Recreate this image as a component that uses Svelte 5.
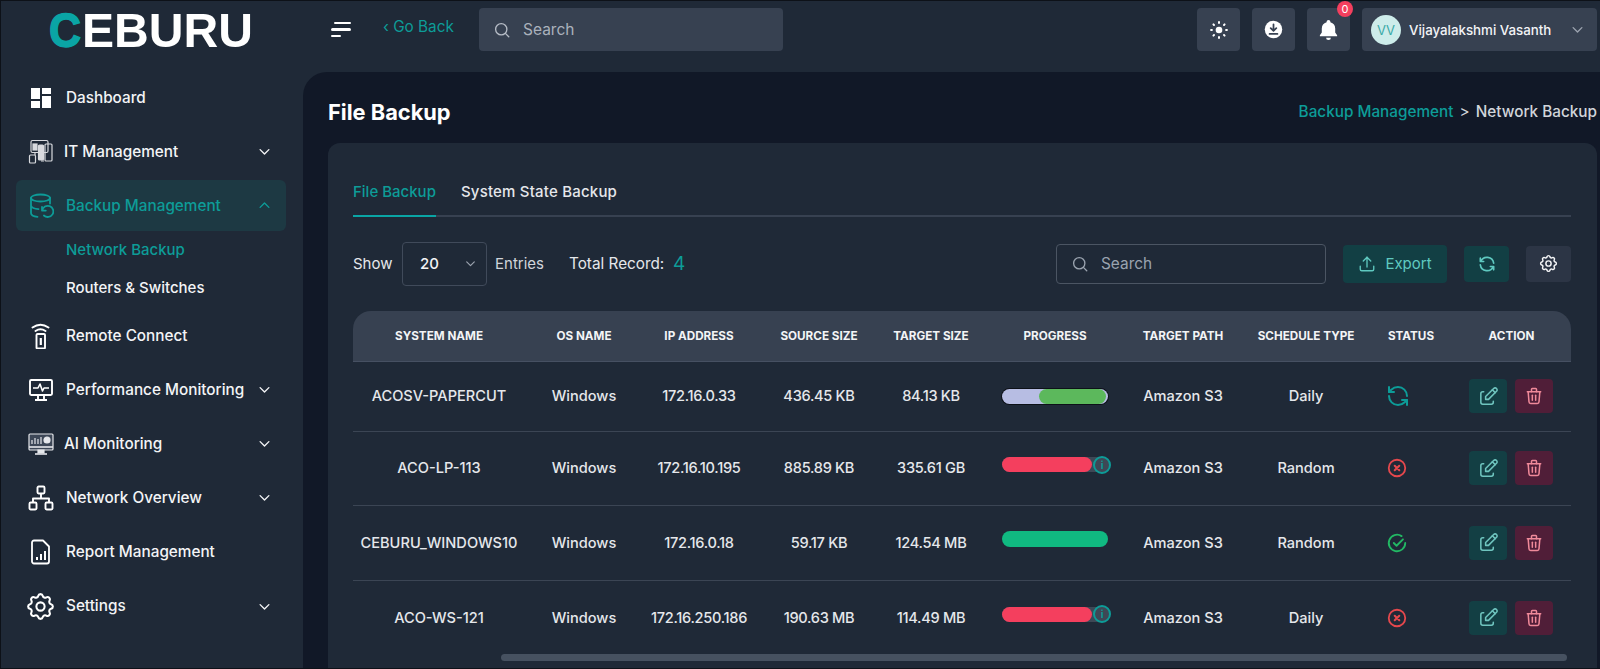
<script>
  const teal = '#0d9c98';
  const nav1 = [
    { label: 'Dashboard', icon: 'dash' },
    { label: 'IT Management', icon: 'it', chev: true, tight: true }
  ];
  const nav2 = [
    { label: 'Remote Connect', icon: 'remote' },
    { label: 'Performance Monitoring', icon: 'perf', chev: true },
    { label: 'AI Monitoring', icon: 'ai', chev: true, tight: true },
    { label: 'Network Overview', icon: 'net', chev: true },
    { label: 'Report Management', icon: 'report' },
    { label: 'Settings', icon: 'gear', chev: true }
  ];
  const cols = [
    ['SYSTEM NAME', 172], ['OS NAME', 118], ['IP ADDRESS', 112], ['SOURCE SIZE', 128], ['TARGET SIZE', 96],
    ['PROGRESS', 152], ['TARGET PATH', 104], ['SCHEDULE TYPE', 142], ['STATUS', 68], ['ACTION', 126]
  ];
  const rows = [
    { name: 'ACOSV-PAPERCUT', ip: '172.16.0.33', src: '436.45 KB', tgt: '84.13 KB', prog: 'mixed', sch: 'Daily', st: 'sync' },
    { name: 'ACO-LP-113', ip: '172.16.10.195', src: '885.89 KB', tgt: '335.61 GB', prog: 'fail', sch: 'Random', st: 'x' },
    { name: 'CEBURU_WINDOWS10', ip: '172.16.0.18', src: '59.17 KB', tgt: '124.54 MB', prog: 'ok', sch: 'Random', st: 'ok' },
    { name: 'ACO-WS-121', ip: '172.16.250.186', src: '190.63 MB', tgt: '114.49 MB', prog: 'fail', sch: 'Daily', st: 'x' }
  ];
</script>

{#snippet chev(up)}
  <svg class="chev" viewBox="0 0 24 24" fill="none" stroke="currentColor" stroke-width="2.2" stroke-linecap="round" stroke-linejoin="round">
    <path d={up ? 'M5 15l7-7 7 7' : 'M5 9l7 7 7-7'} />
  </svg>
{/snippet}

{#snippet gear()}
  <path d="M10.325 4.317c.426 -1.756 2.924 -1.756 3.35 0a1.724 1.724 0 0 0 2.573 1.066c1.543 -.94 3.31 .826 2.37 2.37a1.724 1.724 0 0 0 1.065 2.572c1.756 .426 1.756 2.924 0 3.35a1.724 1.724 0 0 0 -1.066 2.573c.94 1.543 -.826 3.31 -2.37 2.37a1.724 1.724 0 0 0 -2.572 1.065c-.426 1.756 -2.924 1.756 -3.35 0a1.724 1.724 0 0 0 -2.573 -1.066c-1.543 .94 -3.31 -.826 -2.37 -2.37a1.724 1.724 0 0 0 -1.065 -2.572c-1.756 -.426 -1.756 -2.924 0 -3.35a1.724 1.724 0 0 0 1.066 -2.573c-.94 -1.543 .826 -3.31 2.37 -2.37c1 .608 2.296 .07 2.572 -1.065z" />
  <circle cx="12" cy="12" r="3" />
{/snippet}

{#snippet sync()}
  <path d="M21 12a9 9 0 0 0-9-9 9.75 9.75 0 0 0-6.74 2.74L3 8" /><path d="M3 3v5h5" />
  <path d="M3 12a9 9 0 0 0 9 9 9.75 9.75 0 0 0 6.74-2.74L21 16" /><path d="M16 16h5v5" />
{/snippet}

{#snippet navIcon(n)}
  {#if n === 'dash'}
    <svg class="ni" viewBox="0 0 26 26" fill="#fff">
      <rect x="3" y="3" width="9" height="11" /><rect x="14" y="3" width="9" height="6" />
      <rect x="3" y="16" width="9" height="7" /><rect x="14" y="11" width="9" height="12" />
    </svg>
  {:else if n === 'it'}
    <svg class="ni" viewBox="0 0 26 26" fill="none" stroke="#d8dade" stroke-width="1.2">
      <rect x="3" y="1.5" width="17" height="12" rx="1.5" />
      <rect x="5" y="5" width="4" height="6" fill="#d8dade" />
      <rect x="10.5" y="6" width="5" height="15" rx="1" fill="#d8dade" />
      <rect x="17" y="5" width="7" height="17" rx="1" />
      <rect x="1.5" y="16" width="6" height="8" rx="1" />
      <path d="M7 14v2M13 22h3" />
    </svg>
  {:else if n === 'backup'}
    <svg class="ni" viewBox="0 0 26 26" fill="none" stroke={teal} stroke-width="1.8" stroke-linecap="round" stroke-linejoin="round">
      <ellipse cx="12.5" cy="5" rx="9.5" ry="3.5" />
      <path d="M3 5v15c0 2 3 3.5 6.5 3.8M22 5v5.5M3 12.5c0 2 3.5 3.5 7.5 3.6" />
      <path d="M14.2 17.5a5.6 5.6 0 1 1 1.7 5M14 13.8v3.8h3.8" />
    </svg>
  {:else if n === 'remote'}
    <svg class="ni" viewBox="0 0 26 26" fill="none" stroke="#fff" stroke-width="1.9" stroke-linecap="round">
      <path d="M4.5 4.5c5-3.5 11-3.5 16 0M7.5 8c3-2 7-2 10 0" />
      <rect x="8.5" y="11" width="8.5" height="14.5" rx="1" />
      <rect x="11.7" y="15" width="2.2" height="7" fill="#fff" stroke="none" />
    </svg>
  {:else if n === 'perf'}
    <svg class="ni" viewBox="0 0 26 26" fill="none" stroke="#fff" stroke-width="1.9" stroke-linejoin="round">
      <rect x="2" y="3" width="22" height="15" rx="1.2" />
      <path d="M5 11h5l2-4 2.5 7 1.5-3h5" stroke-width="1.6" />
      <path d="M10 18v4M16 18v4M7 23h12" />
    </svg>
  {:else if n === 'ai'}
    <svg class="ni" viewBox="0 0 26 26" fill="none" stroke="#e5e7eb" stroke-width="1.2">
      <rect x="1" y="3" width="24" height="16" rx="1" fill="#3d4757" />
      <path d="M4 13V9M7 13V7M10 13V8M13 13V6" />
      <circle cx="19" cy="9" r="3" fill="#e5e7eb" />
      <path d="M1 16h24" stroke-width="1.6" /><path d="M10 22h6v-3h-6z" fill="#e5e7eb" /><path d="M7 23h12" stroke-width="1.6" />
    </svg>
  {:else if n === 'net'}
    <svg class="ni" viewBox="0 0 26 26" fill="none" stroke="#fff" stroke-width="1.9" stroke-linejoin="round">
      <rect x="9.5" y="1.5" width="7" height="7" rx="1.2" /><rect x="1.5" y="17.5" width="7" height="7" rx="1.2" /><rect x="17.5" y="17.5" width="7" height="7" rx="1.2" />
      <path d="M5 17.5v-4h16v4M13 8.5v5" />
    </svg>
  {:else if n === 'report'}
    <svg class="ni" viewBox="0 0 26 26" fill="none" stroke="#fff" stroke-width="1.8" stroke-linejoin="round">
      <path d="M6 1.5h9l6 6v15a2 2 0 0 1-2 2H6a2 2 0 0 1-2-2v-19a2 2 0 0 1 2-2z" />
      <path d="M9 21v-3M13 21v-6M17 21v-9" stroke-width="2" />
    </svg>
  {:else if n === 'gear'}
    <svg class="ni gearnav" viewBox="0 0 24 24" fill="none" stroke="#fff" stroke-width="1.5">
      {@render gear()}
    </svg>
  {/if}
{/snippet}

<div class="page">
  <header class="top">
    <div class="brand">
      <svg class="logo" viewBox="0 0 216 60" role="img" aria-label="CEBURU">
        <text x="0" y="46" class="logo-c" textLength="32" lengthAdjust="spacingAndGlyphs">C</text>
        <text x="33" y="46" class="logo-t" textLength="171" lengthAdjust="spacingAndGlyphs">EBURU</text>
      </svg>
    </div>
    <div class="burger"><i></i><i></i><i></i></div>
    <span class="goback">‹ Go Back</span>
    <div class="topsearch">
      <svg class="ic16" viewBox="0 0 24 24" fill="none" stroke="#b6bcc6" stroke-width="1.8" stroke-linecap="round"><circle cx="11" cy="11" r="7.5" /><path d="M21 21l-4.5-4.5" /></svg>
      <span>Search</span>
    </div>
    <div class="topright">
      <div class="tbtn">
        <svg viewBox="0 0 24 24" width="20" height="20" fill="#fff" stroke="#fff" stroke-width="2.4" stroke-linecap="round">
          <circle cx="12" cy="12" r="4" stroke="none" />
          <path d="M12 2.5v1M12 20.5v1M2.5 12h1M20.5 12h1M5.3 5.3l.7.7M18 18l.7.7M5.3 18.7l.7-.7M18 6l.7-.7" />
        </svg>
      </div>
      <div class="tbtn">
        <svg viewBox="0 0 24 24" width="21" height="21">
          <circle cx="12" cy="12" r="10" fill="#fff" />
          <path d="M12 6v7M8.8 10.5L12 13.6l3.2-3.1M7.5 17h9" fill="none" stroke="#374151" stroke-width="2" stroke-linecap="round" stroke-linejoin="round" />
        </svg>
      </div>
      <div class="tbtn bell">
        <svg viewBox="0 0 24 24" width="23" height="23" fill="#fff">
          <path d="M12 2a2 2 0 0 0-2 2v.4A7 7 0 0 0 5 11v4l-2 3v1h18v-1l-2-3v-4a7 7 0 0 0-5-6.6V4a2 2 0 0 0-2-2z" /><path d="M9.5 20.5a2.5 2.5 0 0 0 5 0z" />
        </svg>
        <span class="badge">0</span>
      </div>
      <div class="user">
        <span class="avatar">VV</span>
        <span class="uname">Vijayalakshmi Vasanth</span>
        <span class="uchev">{@render chev(false)}</span>
      </div>
    </div>
  </header>

  <div class="body">
    <aside class="side">
      {#each nav1 as it}
        <div class="item" class:tight={it.tight}>
          {@render navIcon(it.icon)}
          <span class="lab">{it.label}</span>
          {#if it.chev}{@render chev(false)}{/if}
        </div>
      {/each}
      <div class="item active">
        {@render navIcon('backup')}
        <span class="lab">Backup Management</span>
        {@render chev(true)}
      </div>
      <div class="sub">
        <div class="subitem on">Network Backup</div>
        <div class="subitem">Routers &amp; Switches</div>
      </div>
      {#each nav2 as it}
        <div class="item" class:tight={it.tight}>
          {@render navIcon(it.icon)}
          <span class="lab">{it.label}</span>
          {#if it.chev}{@render chev(false)}{/if}
        </div>
      {/each}
    </aside>

    <main class="main">
      <div class="pagehead">
        <h1>File Backup</h1>
        <div class="crumb"><span class="tl">Backup Management</span> <b>&gt;</b> Network Backup</div>
      </div>
      <section class="card">
        <div class="tabs">
          <span class="tab on">File Backup</span>
          <span class="tab wide">System State Backup</span>
        </div>
        <div class="tools">
          <span class="show">Show</span>
          <div class="select"><span>20</span>{@render chev(false)}</div>
          <span class="entries">Entries</span>
          <span class="total">Total Record:</span>
          <span class="count">4</span>
          <div class="grow"></div>
          <div class="csearch">
            <svg class="ic16" viewBox="0 0 24 24" fill="none" stroke="#9aa3af" stroke-width="1.8" stroke-linecap="round"><circle cx="11" cy="11" r="7.5" /><path d="M21 21l-4.5-4.5" /></svg>
            <span>Search</span>
          </div>
          <div class="export">
            <svg class="ic16" viewBox="0 0 24 24" fill="none" stroke="#5fc9c0" stroke-width="1.8" stroke-linecap="round" stroke-linejoin="round"><path d="M3 15v4a2 2 0 0 0 2 2h14a2 2 0 0 0 2-2v-4" /><path d="M7 8l5-5 5 5" /><path d="M12 3v13" /></svg>
            <span>Export</span>
          </div>
          <div class="sq refresh">
            <svg width="20" height="20" viewBox="0 0 24 24" fill="none" stroke="#5fc9c0" stroke-width="2" stroke-linecap="round" stroke-linejoin="round">
              <path d="M20 11A8.1 8.1 0 0 0 4.5 9M4 5v4h4" /><path d="M4 13a8.1 8.1 0 0 0 15.5 2M20 19v-4h-4" />
            </svg>
          </div>
          <div class="sq cog">
            <svg width="21" height="21" viewBox="0 0 24 24" fill="none" stroke="#f3f4f6" stroke-width="1.7">{@render gear()}</svg>
          </div>
        </div>

        <table>
          <colgroup>{#each cols as c}<col style="width:{c[1]}px" />{/each}</colgroup>
          <thead><tr>{#each cols as c}<th>{c[0]}</th>{/each}</tr></thead>
          <tbody>
            {#each rows as r}
              <tr>
                <td>{r.name}</td>
                <td>Windows</td>
                <td class="num">{r.ip}</td>
                <td class="num">{r.src}</td>
                <td class="num">{r.tgt}</td>
                <td>
                  <div class="bar {r.prog}">
                    {#if r.prog === 'mixed'}<div class="green"></div>{/if}
                    {#if r.prog === 'fail'}
                      <div class="red"></div>
                      <span class="info">i</span>
                    {/if}
                  </div>
                </td>
                <td>Amazon S3</td>
                <td>{r.sch}</td>
                <td class="st">
                  <svg width={r.st === 'sync' ? 24 : 22} height={r.st === 'sync' ? 24 : 22} viewBox="0 0 24 24" fill="none" stroke-width="2" stroke-linecap="round" stroke-linejoin="round"
                    stroke={r.st === 'sync' ? teal : r.st === 'x' ? '#e5484d' : '#22b864'}>
                    {#if r.st === 'sync'}{@render sync()}
                    {:else if r.st === 'x'}<circle cx="12" cy="12" r="9" /><path d="M9.5 9.5l5 5M14.5 9.5l-5 5" stroke-width="2.2" />
                    {:else}<path d="M21 12a9 9 0 1 1-4-7.5" /><path d="M8.5 12l3 3 7-7" />{/if}
                  </svg>
                </td>
                <td class="act">
                  <div class="acts">
                    <span class="ab edit">
                      <svg width="23" height="23" viewBox="0 0 24 24" fill="none" stroke="#6fc5bf" stroke-width="1.6" stroke-linecap="round" stroke-linejoin="round">
                        <path d="M7 7h-1a2 2 0 0 0 -2 2v9a2 2 0 0 0 2 2h9a2 2 0 0 0 2 -2v-1" /><path d="M20.385 6.585a2.1 2.1 0 0 0 -2.97 -2.97l-8.415 8.385v3h3l8.385 -8.415z" /><path d="M16 5l3 3" />
                      </svg>
                    </span>
                    <span class="ab del">
                      <svg width="20" height="20" viewBox="0 0 24 24" fill="none" stroke="#f08a9a" stroke-width="1.8" stroke-linecap="round" stroke-linejoin="round">
                        <path d="M4 7h16" /><path d="M10 11v6" /><path d="M14 11v6" /><path d="M5 7l1 12a2 2 0 0 0 2 2h8a2 2 0 0 0 2 -2l1 -12" /><path d="M9 7v-3a1 1 0 0 1 1 -1h4a1 1 0 0 1 1 1v3" />
                      </svg>
                    </span>
                  </div>
                </td>
              </tr>
            {/each}
          </tbody>
        </table>
        <div class="scroll"></div>
      </section>
    </main>
  </div>
</div>

<style>
  :global(body) { margin: 0; background: #111827; }
  .page {
    box-sizing: border-box; width: 1600px; height: 669px; overflow: hidden;
    border: 1px solid #0d1118; border-right: 0;
    background: #1f2937; color: #f3f4f6;
    font-family: Inter, "Noto Sans", sans-serif; font-size: 14.5px; font-weight: 400;
    display: flex; flex-direction: column;
  }
  .top { height: 71px; flex: none; display: flex; align-items: flex-start; position: relative; }
  .brand { width: 330px; padding: 0 0 0 48px; box-sizing: border-box; flex: none; }
  .logo { width: 216px; height: 60px; display: block; }
  .logo-c { font: 700 49px "Liberation Sans", sans-serif; fill: #0aa5a5; stroke: #0aa5a5; stroke-width: 1.5px; }
  .logo-t { font: 700 49px "Liberation Sans", sans-serif; fill: #fff; }
  .burger { width: 20px; margin-top: 21px; display: flex; flex-direction: column; gap: 4px; flex: none; align-items: flex-end; }
  .burger i { display: block; height: 2.4px; background: #fff; border-radius: 2px; width: 100%; }
  .burger i:nth-child(1) { width: 85%; }
  .burger i:nth-child(3) { width: 50%; align-self: flex-start; }
  .goback { margin: 16px 0 0 32px; color: #0d9c98; font-size: 15.3px; width: 96px; flex: none; white-space: nowrap; }
  .topsearch {
    width: 304px; height: 43px; margin-top: 7px; background: #374151; border-radius: 4px; flex: none;
    display: flex; align-items: center; gap: 12px; padding-left: 14px; box-sizing: border-box; color: #aab1bc; font-size: 15.5px;
  }
  .ic16 { width: 18px; height: 18px; flex: none; }
  .topright { margin: 7px 0 0 auto; display: flex; gap: 12px; padding-right: 3px; }
  .tbtn { width: 43px; height: 43px; background: #374151; border-radius: 4px; display: flex; align-items: center; justify-content: center; position: relative; }
  .badge {
    position: absolute; top: -7px; right: -3px; width: 16px; height: 16px; border-radius: 50%;
    background: #f43f5e; color: #fff; font-size: 11px; line-height: 16px; text-align: center;
  }
  .user { width: 235px; height: 43px; background: #374151; border-radius: 4px; display: flex; align-items: center; box-sizing: border-box; padding-left: 9px; }
  .avatar { width: 30px; height: 30px; border-radius: 50%; background: #cdecea; color: #3aa9a6; font-size: 13px; text-align: center; line-height: 30px; flex: none; }
  .uname { margin-left: 8px; font-size: 13.3px; font-weight: 500; width: 154px; white-space: nowrap; color: #f3f4f6; }
  .uchev { color: #9ca3af; display: flex; margin-left: 7px; }

  .body { flex: 1; display: flex; min-height: 0; }
  .side { width: 302px; flex: none; font-weight: 500; font-size: 15.3px; }
  .item { height: 51px; margin: 0 17px 3.1px 15px; padding: 0 14px 0 12px; display: flex; align-items: center; border-radius: 6px; color: #f3f4f6; }
  .ni { width: 26px; height: 26px; flex: none; margin-right: 12px; }
  .gearnav { width: 33px; height: 33px; margin: 0 9px 0 -4px; }
  .item.tight .lab { margin-left: -2px; }
  .lab { flex: 1; white-space: nowrap; padding-bottom: 1px; }
  .chev { width: 15px; height: 15px; flex: none; }
  .item.active { background: #1d3943; color: #0d9c98; }
  .sub { margin: -3.1px 0 3px 65px; font-size: 15px; }
  .subitem { height: 38px; line-height: 37px; }
  .subitem.on { color: #0d9c98; }

  .main { flex: 1; min-width: 0; background: #111827; border-top-left-radius: 24px; padding: 0 3px 0 25px; display: flex; flex-direction: column; }
  .pagehead { height: 71px; flex: none; box-sizing: border-box; padding-top: 8px; display: flex; align-items: center; justify-content: space-between; }
  h1 { margin: 0; font-size: 21.8px; font-weight: 700; color: #fff; }
  .crumb { font-size: 15.3px; color: #d1d5db; font-weight: 500; white-space: nowrap; }
  .crumb b { font-weight: 400; margin: 0 2px; }
  .tl { color: #0d9c98; }
  .card { flex: 1; background: #1f2937; border-radius: 12px 12px 0 0; padding: 0 26px 0 25px; position: relative; }
  .tabs { height: 74px; box-sizing: border-box; border-bottom: 2px solid #374151; display: flex; align-items: flex-end; gap: 25px; }
  .tab { height: 48px; line-height: 46px; font-size: 15px; font-weight: 500; color: #e5e7eb; box-sizing: border-box; margin-bottom: -2px; white-space: nowrap; }
  .tab.wide { letter-spacing: .2px; }
  .tab.on { color: #0d9c98; border-bottom: 2px solid #0aa5a5; }
  .tools { height: 95px; box-sizing: border-box; padding-bottom: 2px; display: flex; align-items: center; font-size: 15px; }
  .show { color: #e5e7eb; width: 49px; flex: none; }
  .select { box-sizing: border-box; width: 85px; height: 44px; border: 1px solid #404a5a; border-radius: 4px; display: flex; align-items: center; justify-content: space-between; padding: 0 9px 0 17px; font-weight: 500; flex: none; }
  .select .chev { color: #9ca3af; width: 13px; height: 13px; }
  .entries { margin-left: 8px; width: 74px; color: #d1d5db; flex: none; }
  .total { width: 104px; color: #e5e7eb; flex: none; white-space: nowrap; font-size: 15.3px; }
  .count { color: #0d9c98; font-size: 19px; }
  .grow { flex: 1; }
  .csearch { box-sizing: border-box; width: 270px; height: 40px; border: 1px solid #4b5563; border-radius: 4px; display: flex; align-items: center; gap: 12px; padding-left: 14px; color: #9aa3af; font-size: 15.4px; }
  .export { width: 104px; height: 38px; margin-left: 17px; border-radius: 4px; background: #123f44; color: #5fc9c0; display: flex; align-items: center; justify-content: center; gap: 9px; }
  .sq { width: 45px; height: 36px; border-radius: 4px; display: flex; align-items: center; justify-content: center; }
  .refresh { background: #123f44; margin-left: 17px; }
  .cog { background: #2c3545; margin-left: 17px; }

  table { width: 1218px; border-collapse: separate; border-spacing: 0; table-layout: fixed; margin-top: -1px; }
  th { height: 51px; box-sizing: border-box; background: #374151; color: #f3f4f6; font-size: 11.7px; font-weight: 700; text-align: center; border-bottom: 1px solid #465062; padding: 0; white-space: nowrap; }
  th:first-child { border-top-left-radius: 18px; }
  th:last-child { border-top-right-radius: 18px; padding-left: 7px; }
  td { height: 74.5px; box-sizing: border-box; text-align: center; font-size: 14.6px; font-weight: 500; color: #e5e7eb; border-bottom: 1px solid #3b4554; padding: 0; white-space: nowrap; }
  td.num { letter-spacing: -.3px; }
  tbody tr:first-child td { height: 69.5px; }
  tbody tr:last-child td { border-bottom: 0; }
  .bar { width: 106px; height: 15px; margin: 0 auto 7px 23px; border-radius: 8px; position: relative; background: #10b981; }
  .bar.ok { height: 16px; }
  .bar.mixed { margin-bottom: 0; background: #b7bde3; overflow: hidden; box-shadow: 0 0 0 1px #0d1118; }
  .green { position: absolute; left: 37px; right: 2px; top: 0; bottom: 0; background: #5cb85c; border-radius: 8px; }
  .bar.fail { background: #3e4856; }
  .red { position: absolute; left: 0; top: 0; bottom: 0; width: 90px; background: #f43f5e; border-radius: 8px; }
  .info { position: absolute; left: 91px; top: -1.5px; box-sizing: border-box; width: 18px; height: 18px; border: 2px solid #0d9c98; border-radius: 50%; background: #3e4856; color: #0d9c98; font-size: 10px; font-weight: 700; line-height: 14px; text-align: center; }
  .st svg { display: block; margin-left: 9px; }
  .act { padding-left: 24px; }
  .acts { display: flex; gap: 8px; }
  .ab { width: 38px; height: 34px; border-radius: 4px; display: flex; align-items: center; justify-content: center; }
  .edit { background: #133f44; }
  .del { background: #501e38; }
  .scroll { position: absolute; left: 173px; width: 1066px; bottom: 7px; height: 7px; border-radius: 4px; background: #465160; }
</style>
